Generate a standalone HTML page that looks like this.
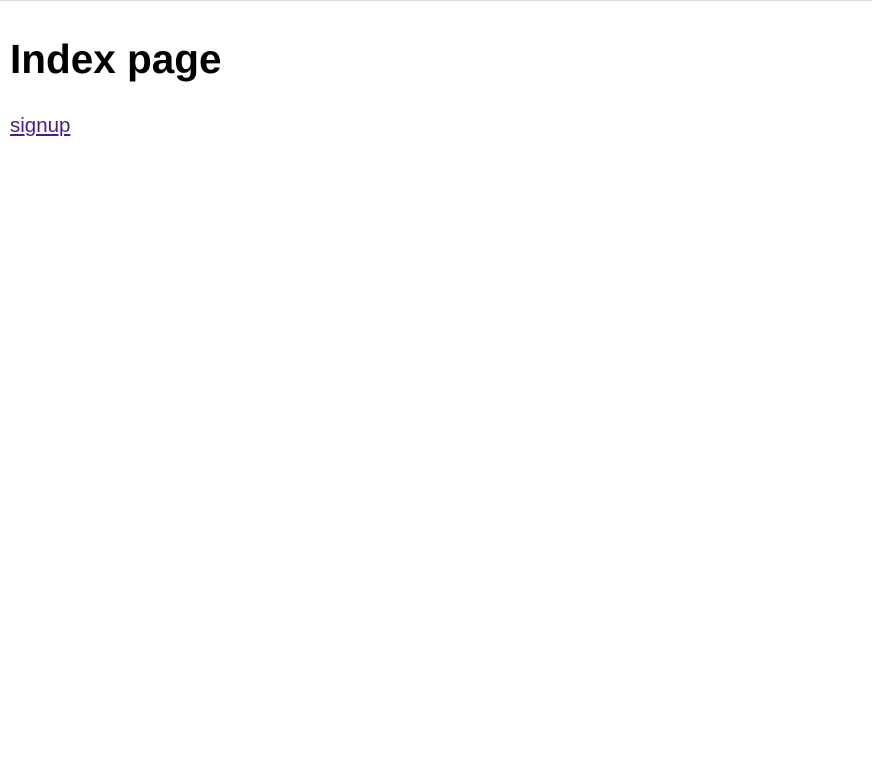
<!DOCTYPE html>
<html><head><style>
html,body{margin:0;padding:0;background:#fff;width:872px;height:783px;overflow:hidden}
body{border-top:1px solid #dcdcdc;position:relative;font-family:"Liberation Sans",sans-serif}
h1{position:absolute;left:10px;top:34px;margin:0;font-size:40.5px;font-weight:bold;line-height:48px;color:#000}
a{position:absolute;left:10px;top:113px;font-size:20.5px;line-height:24px;color:#4b1a8c}
</style></head><body>
<h1>Index page</h1>
<a href="#">signup</a>
</body></html>
